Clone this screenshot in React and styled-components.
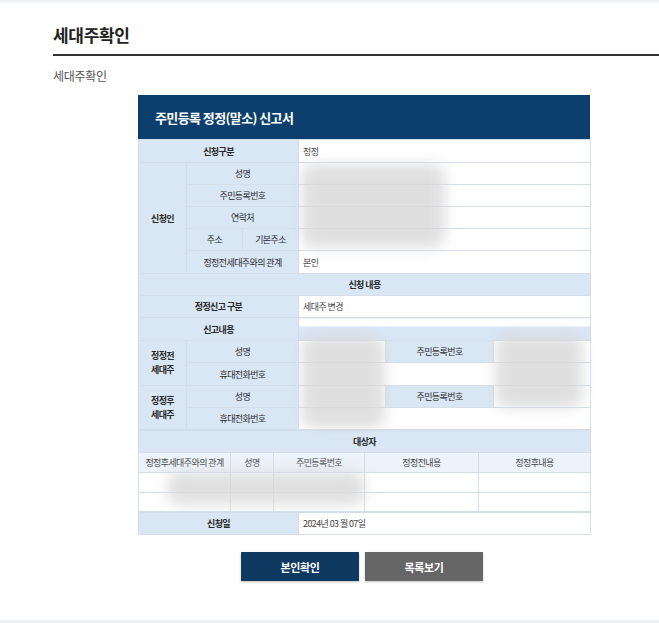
import React from "react";
import styled, { createGlobalStyle } from "styled-components";

const GlobalStyle = createGlobalStyle`
  html, body {
    margin: 0;
    padding: 0;
    background: #fff;
  }
  body {
    font-family: "Noto Sans CJK KR", "Noto Sans", sans-serif;
    color: #333;
  }
`;

const Page = styled.div`
  width: 659px;
  height: 623px;
  overflow: hidden;
  display: flex;
  flex-direction: column;
  border-top: 3px solid #f1f2f7;
  border-bottom: 3px solid #eef0f3;
  box-sizing: border-box;
`;

const Content = styled.div`
  flex: 1;
  padding: 19px 0 0 53px;
`;

const PageTitle = styled.h1`
  margin: 0;
  font-size: 17px;
  font-weight: 700;
  letter-spacing: -0.3px;
  line-height: 26px;
  color: #222;
  padding-bottom: 6px;
  border-bottom: 2px solid #333;
`;

const SubTitle = styled.h2`
  margin: 10px 0 0;
  font-size: 12px;
  font-weight: 400;
  line-height: 20px;
  color: #555;
  letter-spacing: -0.3px;
`;

const Form = styled.div`
  position: relative;
  width: 452px;
  margin: 9px 0 0 85px;
`;

const FormHead = styled.div`
  height: 44px;
  background: #0c3f6d;
  color: #fff;
  font-size: 13px;
  font-weight: 700;
  letter-spacing: -0.6px;
  display: flex;
  align-items: center;
  padding-left: 17px;
`;

const Table = styled.table`
  width: 452px;
  table-layout: fixed;
  border-collapse: collapse;
  border-left: 1px solid #d4dde7;
  border-right: 1px solid #d4dde7;
`;

const Cell = styled.td`
  height: ${p => p.$h || 21}px;
  padding: 0 4px;
  font-size: 9px;
  line-height: ${p => (p.$tall ? 14 : 11)}px;
  letter-spacing: -0.6px;
  border: 1px solid #d3dee9;
  background: ${p => (p.$label ? "#d9e7f5" : p.$head ? "#edf3fa" : "#fff")};
  font-weight: ${p => (p.$bold ? 700 : 400)};
  text-align: ${p => (p.$label || p.$head ? "center" : "left")};
  color: ${p => (p.$label ? "#2a2a2a" : "#444")};
  white-space: nowrap;
  overflow: hidden;
`;

const SplitCell = styled(Cell)`
  background: linear-gradient(#fff 0 8px, #d9e7f5 8px);
`;

const Blur = styled.div`
  position: absolute;
  left: ${p => p.$x}px;
  top: ${p => p.$y}px;
  width: ${p => p.$w}px;
  height: ${p => p.$h}px;
  background: #d8d8d8;
  border-radius: 12px;
  filter: blur(7px);
  opacity: 0.8;
  pointer-events: none;
`;

const Buttons = styled.div`
  display: flex;
  justify-content: center;
  gap: 6px;
  width: 448px;
  margin: 17px 0 0 85px;
`;

const Button = styled.button`
  width: 118px;
  height: 29px;
  border: 0;
  padding: 0;
  font-family: inherit;
  font-size: 11px;
  font-weight: 700;
  letter-spacing: -0.4px;
  color: #fff;
  background: ${p => (p.$gray ? "#666666" : "#0e3a62")};
  box-shadow: 0 1px 2px rgba(0, 0, 0, 0.25);
  cursor: pointer;
`;

const Cols = ({ widths }) => (
  <colgroup>
    {widths.map((w, i) => (
      <col key={i} style={{ width: w }} />
    ))}
  </colgroup>
);

export default function App() {
  return (
    <>
      <GlobalStyle />
      <Page>
        <Content>
          <PageTitle>세대주확인</PageTitle>
          <SubTitle>세대주확인</SubTitle>
          <Form>
            <FormHead>주민등록 정정(말소) 신고서</FormHead>
            <Table>
              <Cols widths={[48, 56, 56, 87, 108, 97]} />
              <tbody>
                <tr>
                  <Cell $label $bold colSpan={3} $h={22}>신청구분</Cell>
                  <Cell colSpan={3} $h={22}>정정</Cell>
                </tr>
                <tr>
                  <Cell $label $bold rowSpan={5}>신청인</Cell>
                  <Cell $label colSpan={2}>성명</Cell>
                  <Cell colSpan={3} />
                </tr>
                <tr>
                  <Cell $label colSpan={2}>주민등록번호</Cell>
                  <Cell colSpan={3} />
                </tr>
                <tr>
                  <Cell $label colSpan={2}>연락처</Cell>
                  <Cell colSpan={3} />
                </tr>
                <tr>
                  <Cell $label>주소</Cell>
                  <Cell $label>기본주소</Cell>
                  <Cell colSpan={3} />
                </tr>
                <tr>
                  <Cell $label colSpan={2} $h={22}>정정전세대주와의 관계</Cell>
                  <Cell colSpan={3} $h={22}>본인</Cell>
                </tr>
                <tr>
                  <Cell $label $bold colSpan={6}>신청 내용</Cell>
                </tr>
                <tr>
                  <Cell $label $bold colSpan={3}>정정신고 구분</Cell>
                  <Cell colSpan={3}>세대주 변경</Cell>
                </tr>
                <tr>
                  <Cell $label $bold colSpan={3} $h={22}>신고내용</Cell>
                  <SplitCell colSpan={3} $h={22} />
                </tr>
                <tr>
                  <Cell $label $bold $tall rowSpan={2}>정정전<br />세대주</Cell>
                  <Cell $label colSpan={2}>성명</Cell>
                  <Cell />
                  <Cell $label>주민등록번호</Cell>
                  <Cell />
                </tr>
                <tr>
                  <Cell $label colSpan={2} $h={22}>휴대전화번호</Cell>
                  <Cell colSpan={3} $h={22} />
                </tr>
                <tr>
                  <Cell $label $bold $tall rowSpan={2}>정정후<br />세대주</Cell>
                  <Cell $label colSpan={2}>성명</Cell>
                  <Cell />
                  <Cell $label>주민등록번호</Cell>
                  <Cell />
                </tr>
                <tr>
                  <Cell $label colSpan={2}>휴대전화번호</Cell>
                  <Cell colSpan={3} />
                </tr>
              </tbody>
            </Table>
            <Table>
              <Cols widths={[92, 43, 91, 114, 112]} />
              <tbody>
                <tr>
                  <Cell $label $bold colSpan={5}>대상자</Cell>
                </tr>
                <tr>
                  <Cell $head $h={19}>정정후세대주와의 관계</Cell>
                  <Cell $head $h={19}>성명</Cell>
                  <Cell $head $h={19}>주민등록번호</Cell>
                  <Cell $head $h={19}>정정전내용</Cell>
                  <Cell $head $h={19}>정정후내용</Cell>
                </tr>
                <tr>
                  <Cell $h={19} />
                  <Cell $h={19} />
                  <Cell $h={19} />
                  <Cell $h={19} />
                  <Cell $h={19} />
                </tr>
                <tr>
                  <Cell $h={18} />
                  <Cell $h={18} />
                  <Cell $h={18} />
                  <Cell $h={18} />
                  <Cell $h={18} />
                </tr>
              </tbody>
            </Table>
            <Table>
              <Cols widths={[160, 292]} />
              <tbody>
                <tr>
                  <Cell $label $bold>신청일</Cell>
                  <Cell>2024년 03 월 07일</Cell>
                </tr>
              </tbody>
            </Table>
            <Blur $x={163} $y={69} $w={144} $h={84} />
            <Blur $x={163} $y={240} $w={84} $h={93} />
            <Blur $x={357} $y={239} $w={88} $h={74} />
            <Blur $x={29} $y={376} $w={198} $h={34} />
          </Form>
          <Buttons>
            <Button type="button">본인확인</Button>
            <Button type="button" $gray>목록보기</Button>
          </Buttons>
        </Content>
      </Page>
    </>
  );
}
